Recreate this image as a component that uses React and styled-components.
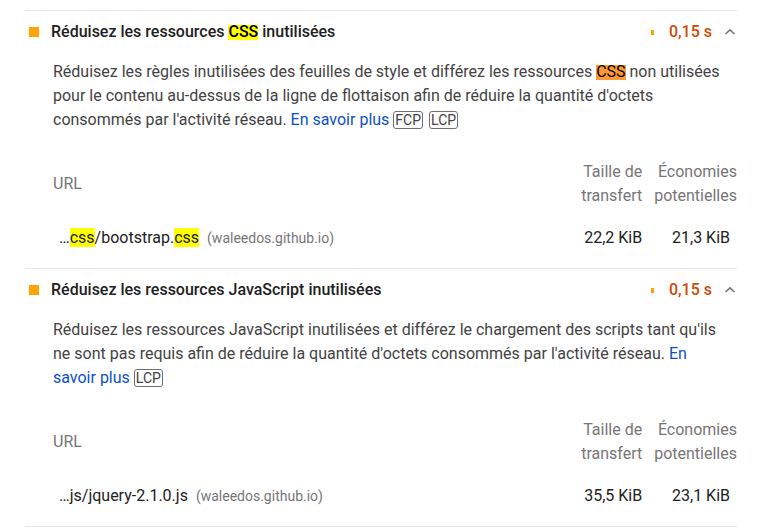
import styled, { createGlobalStyle } from 'styled-components';

const GlobalStyle = createGlobalStyle`
  body {
    margin: 0;
    background: #fff;
    font-family: Roboto, "Liberation Sans", Arial, sans-serif;
    -webkit-font-smoothing: antialiased;
  }
`;

const Page = styled.div`
  padding: 10px 32px 0 25px;
  width: 712px;
`;

const Audit = styled.section`
  border-top: 1px solid #e8e8e8;

  &:last-child {
    border-bottom: 1px solid #e8e8e8;
  }
`;

const Summary = styled.div`
  display: flex;
  align-items: center;
  height: 41px;
  padding-right: 1px;
`;

const Square = styled.span`
  width: 10px;
  height: 10px;
  margin: 1px 12px 0 4px;
  background: #ffa400;
  flex-shrink: 0;
`;

const Title = styled.span`
  flex: 1;
  font-size: 16px;
  font-weight: 500;
  color: #212121;
`;

const Bar = styled.span`
  width: 3px;
  height: 5px;
  margin-top: 1px;
  background: #ffa400;
`;

const Saving = styled.span`
  margin-left: 15px;
  font-size: 16px;
  font-weight: 500;
  color: #cf4a06;
`;

const Chevron = styled.svg`
  margin-left: 12px;
  width: 12px;
  height: 8px;
`;

/* highlight covers only cap-top to just under the baseline, as in the report */
const Mark = styled.span`
  color: #000;
  background: linear-gradient(
    transparent 3.5px,
    ${({ $tone }) => ($tone === 'orange' ? '#ff9a32' : '#ffff00')} 3.5px,
    ${({ $tone }) => ($tone === 'orange' ? '#ff9a32' : '#ffff00')} 18px,
    transparent 18px
  );
`;

const Description = styled.p`
  margin: 8px 14px 0 28px;
  font-size: 16px;
  line-height: 24px;
  color: #434343;
`;

const Link = styled.a`
  color: #0c50c7;
  text-decoration: none;
`;

const Badge = styled.span`
  margin-left: 4px;
  padding: 0 1px;
  border: 1px solid #6f6f6f;
  border-radius: 3px;
  font-size: 14px;
  color: #424242;

  & + & {
    margin-left: 6px;
  }
`;

const Table = styled.div`
  display: grid;
  grid-template-columns: 1fr auto auto;
  column-gap: 12px;
  margin: 28px 0 0 28px;
  font-size: 16px;
  line-height: 24px;
`;

const HeadCell = styled.div`
  color: #767676;
  text-align: ${({ $left }) => ($left ? 'left' : 'right')};
  align-self: center;
`;

const Cell = styled.div`
  padding: 18px ${({ $last }) => ($last ? '7px' : '0')} 18px 0;
  color: #212121;
  text-align: right;
  white-space: nowrap;
`;

const UrlCell = styled(Cell)`
  padding-left: 6px;
  text-align: left;
`;

const UrlMark = styled.span`
  background: #ffff00;
`;

const Host = styled.span`
  margin-left: 8px;
  font-size: 14px;
  color: #767676;
`;

const audits = [
  {
    title: <>Réduisez les ressources <Mark>CSS</Mark> inutilisées</>,
    text: (
      <>
        Réduisez les règles inutilisées des feuilles de style et différez les ressources{' '}
        <Mark $tone="orange">CSS</Mark> non utilisées pour le contenu au-dessus de la ligne de
        flottaison afin de réduire la quantité d'octets consommés par l'activité réseau.{' '}
        <Link href="#">En savoir plus</Link>
      </>
    ),
    badges: ['FCP', 'LCP'],
    url: <>…<UrlMark>css</UrlMark>/bootstrap.<UrlMark>css</UrlMark></>,
    size: '22,2 KiB',
    saved: '21,3 KiB',
  },
  {
    title: <>Réduisez les ressources JavaScript inutilisées</>,
    text: (
      <>
        Réduisez les ressources JavaScript inutilisées et différez le chargement des scripts tant
        qu'ils ne sont pas requis afin de réduire la quantité d'octets consommés par l'activité
        réseau. <Link href="#">En savoir plus</Link>
      </>
    ),
    badges: ['LCP'],
    url: <>…js/jquery-2.1.0.js</>,
    size: '35,5 KiB',
    saved: '23,1 KiB',
  },
];

export default function App() {
  return (
    <>
      <GlobalStyle />
      <Page>
        {audits.map((audit, i) => (
          <Audit key={i}>
            <Summary>
              <Square />
              <Title>{audit.title}</Title>
              <Bar />
              <Saving>0,15 s</Saving>
              <Chevron viewBox="0 0 12 8">
                <polyline points="1.5,6 6,1.8 10.5,6" fill="none" stroke="#777" strokeWidth="1.6" />
              </Chevron>
            </Summary>

            <Description>
              {audit.text}
              {audit.badges.map((b) => (
                <Badge key={b}>{b}</Badge>
              ))}
            </Description>

            <Table>
              <HeadCell $left>URL</HeadCell>
              <HeadCell>Taille de<br />transfert</HeadCell>
              <HeadCell>Économies<br />potentielles</HeadCell>

              <UrlCell>
                {audit.url}
                <Host>(waleedos.github.io)</Host>
              </UrlCell>
              <Cell>{audit.size}</Cell>
              <Cell $last>{audit.saved}</Cell>
            </Table>
          </Audit>
        ))}
      </Page>
    </>
  );
}
